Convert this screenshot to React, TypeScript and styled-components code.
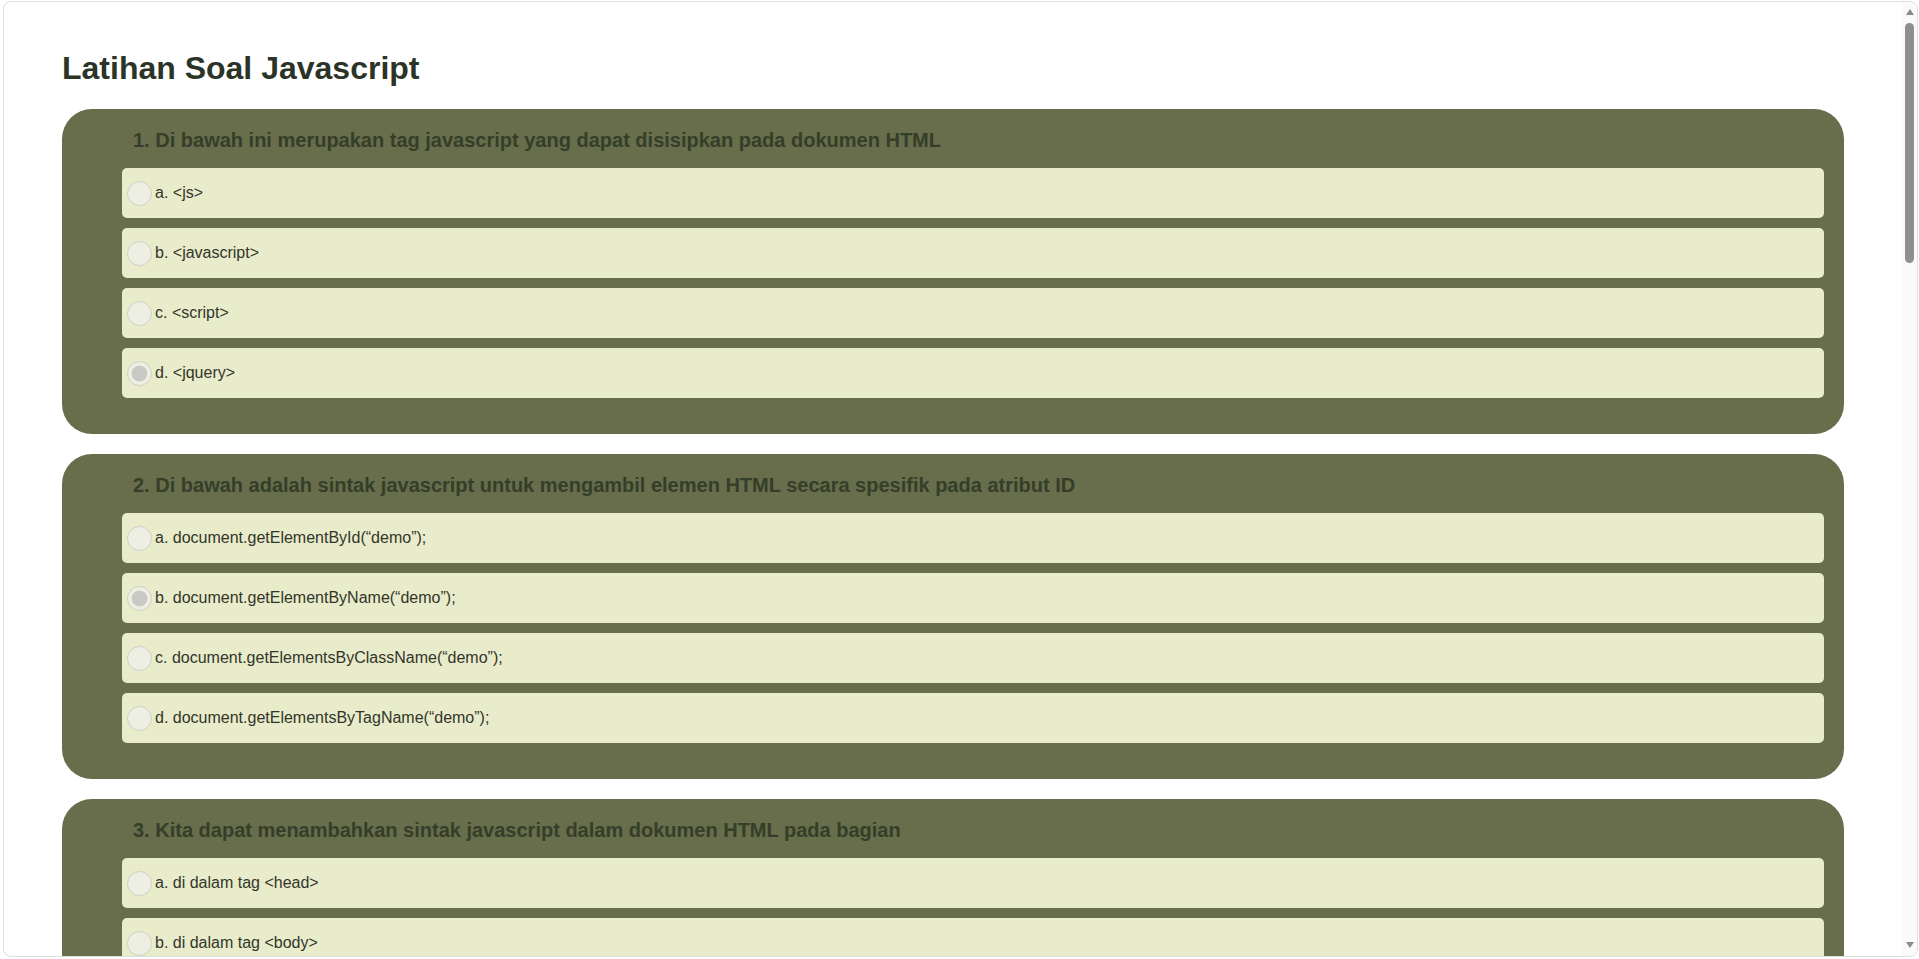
import React from "react";
import styled, { createGlobalStyle } from "styled-components";

const GlobalStyle = createGlobalStyle`
  html, body {
    margin: 0;
    padding: 0;
    background: #ffffff;
    overflow: hidden;
  }
  body {
    font-family: "Liberation Sans", Arial, Helvetica, sans-serif;
  }
  * { box-sizing: border-box; }
`;

const Frame = styled.div`
  width: 1915px;
  height: 956px;
  margin: 1px 0 0 3px;
  border: 1px solid #dedede;
  border-radius: 8px;
  background: #ffffff;
  display: flex;
  overflow: hidden;
`;

const Content = styled.main`
  flex: 1;
  min-width: 0;
  overflow: hidden;
  padding: 0 58px;
`;

const Title = styled.h1`
  margin: 48px 0 22px 0;
  font-size: 32px;
  line-height: 37px;
  font-weight: 700;
  color: #2b3427;
`;

const Card = styled.section`
  background: #686d4b;
  border-radius: 30px;
  padding: 20px 20px 36px 60px;
  margin-bottom: 20px;
`;

const Question = styled.h3`
  margin: 0 0 16px 11px;
  font-size: 20px;
  line-height: 23px;
  font-weight: 700;
  color: #343e29;
`;

const Options = styled.div`
  display: flex;
  flex-direction: column;
  gap: 10px;
`;

const Option = styled.label`
  height: 50px;
  display: flex;
  align-items: center;
  background: #e8ecca;
  border-radius: 5px;
  font-size: 16px;
  color: #33352a;
  cursor: pointer;
`;

const Radio = styled.input.attrs({ type: "radio" })`
  appearance: none;
  -webkit-appearance: none;
  width: 25px;
  height: 25px;
  margin: 1px 3px 0 5px;
  border-radius: 50%;
  border: 1px solid #cfd0c4;
  background: #eeefe3;
  flex-shrink: 0;
  &:checked {
    background: radial-gradient(circle, #c9c9c6 0 7.5px, #eeefe3 8.3px);
  }
`;

const ScrollTrack = styled.div`
  width: 15px;
  flex-shrink: 0;
  background: #fafafa;
  display: flex;
  flex-direction: column;
  align-items: center;
  padding: 7px 0 8px;
`;

const ArrowUp = styled.div`
  width: 0;
  height: 0;
  border-left: 4.5px solid transparent;
  border-right: 4.5px solid transparent;
  border-bottom: 6px solid #8a8a8a;
`;

const ArrowDown = styled.div`
  width: 0;
  height: 0;
  margin-top: auto;
  border-left: 4.5px solid transparent;
  border-right: 4.5px solid transparent;
  border-top: 6px solid #8a8a8a;
`;

const Thumb = styled.div`
  width: 9px;
  height: 240px;
  margin-top: 8px;
  border-radius: 5px;
  background: #8f8f8f;
`;

type Q = { text: string; options: string[]; checked?: number };

const questions: Q[] = [
  {
    text: "1. Di bawah ini merupakan tag javascript yang dapat disisipkan pada dokumen HTML",
    options: ["a. <js>", "b. <javascript>", "c. <script>", "d. <jquery>"],
    checked: 3,
  },
  {
    text: "2. Di bawah adalah sintak javascript untuk mengambil elemen HTML secara spesifik pada atribut ID",
    options: [
      "a. document.getElementById(\u201cdemo\u201d);",
      "b. document.getElementByName(\u201cdemo\u201d);",
      "c. document.getElementsByClassName(\u201cdemo\u201d);",
      "d. document.getElementsByTagName(\u201cdemo\u201d);",
    ],
    checked: 1,
  },
  {
    text: "3. Kita dapat menambahkan sintak javascript dalam dokumen HTML pada bagian",
    options: [
      "a. di dalam tag <head>",
      "b. di dalam tag <body>",
      "c. di dalam tag <head> dan <body>",
      "d. di luar tag <html>",
    ],
  },
];

export default function App() {
  return (
    <>
      <GlobalStyle />
      <Frame>
        <Content>
          <Title>Latihan Soal Javascript</Title>
          {questions.map((q, qi) => (
            <Card key={qi}>
              <Question>{q.text}</Question>
              <Options>
                {q.options.map((o, oi) => (
                  <Option key={oi}>
                    <Radio name={`q${qi}`} defaultChecked={q.checked === oi} />
                    {o}
                  </Option>
                ))}
              </Options>
            </Card>
          ))}
        </Content>
        <ScrollTrack>
          <ArrowUp />
          <Thumb />
          <ArrowDown />
        </ScrollTrack>
      </Frame>
    </>
  );
}
